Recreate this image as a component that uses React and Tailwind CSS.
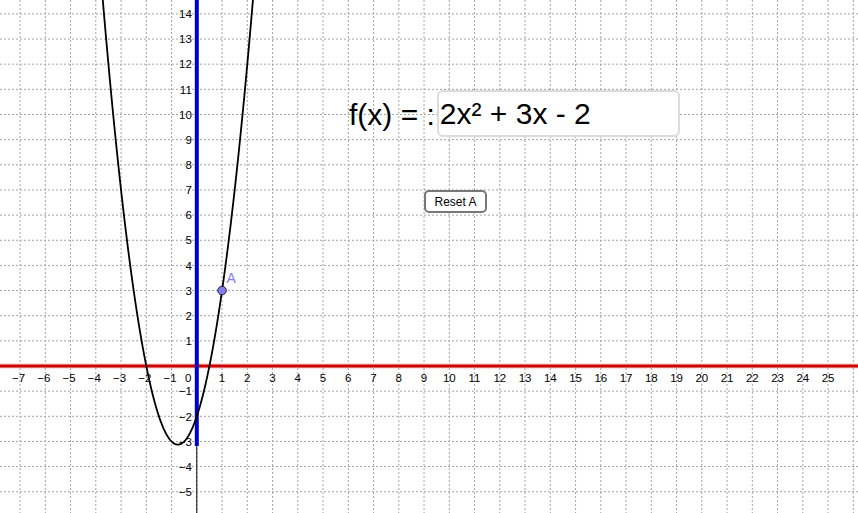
import React from "react";

const OX = 196.8;
const OY = 366;
const UX = 25.25;
const UY = 25.15;
const px = (x) => OX + x * UX;
const py = (y) => OY - y * UY;
const f = (x) => 2 * x * x + 3 * x - 2;

const minus = (n) => (n < 0 ? "\u2212" + Math.abs(n) : String(n));
const FONT = '"Liberation Sans", Arial, sans-serif';

function Graph() {
  const vx = [];
  for (let k = -7; k <= 26; k++) vx.push(k);
  const hy = [];
  for (let k = -5; k <= 14; k++) hy.push(k);

  let d = "";
  for (let i = 0; i <= 400; i++) {
    const x = -4.2 + (i / 400) * 6.9;
    d += (i === 0 ? "M" : "L") + px(x).toFixed(2) + " " + py(f(x)).toFixed(2) + " ";
  }

  return (
    <svg width="858" height="513" className="block" fontFamily={FONT}>
      {vx.map((k) => (
        <line key={"v" + k} x1={px(k)} y1={0} x2={px(k)} y2={513} stroke="#a3a3a3" strokeWidth="1" strokeDasharray="2 2" />
      ))}
      {hy.map((k) => (
        <line key={"h" + k} x1={0} y1={py(k)} x2={858} y2={py(k)} stroke="#a3a3a3" strokeWidth="1" strokeDasharray="2 2" />
      ))}
      <line x1={OX} y1={0} x2={OX} y2={513} stroke="#000" strokeWidth="1" />
      <line x1={0} y1={OY} x2={858} y2={OY} stroke="#000" strokeWidth="1" />

      {vx
        .filter((k) => k !== 0 && k <= 25)
        .map((k) => (
          <text key={"xl" + k} x={px(k) + (k < 0 ? -1.5 : 0)} y={382} fontSize="11.5" textAnchor="middle" fill="#000">
            {minus(k)}
          </text>
        ))}
      <text x={191.5} y={382} fontSize="11.5" textAnchor="end" fill="#000">
        0
      </text>
      {hy
        .filter((k) => k !== 0)
        .map((k) => (
          <text key={"yl" + k} x={191.8} y={py(k) + 4.2} fontSize="11.5" textAnchor="end" fill="#000">
            {minus(k)}
          </text>
        ))}

      <line x1={0} y1={OY} x2={858} y2={OY} stroke="#e98a8a" strokeWidth="4.5" />
      <line x1={0} y1={OY} x2={858} y2={OY} stroke="#cc0000" strokeWidth="2.6" />

      <line x1={OX} y1={0} x2={OX} y2={446} stroke="#0000cc" strokeWidth="4" />

      <path d={d} fill="none" stroke="#000" strokeWidth="1.8" />

      <circle cx={px(1)} cy={py(3)} r="4.3" fill="#7d7df0" stroke="#222" strokeWidth="1" />
      <text x={226.5} y={283} fontSize="14" fill="#7d7df0">
        A
      </text>
    </svg>
  );
}

export default function App() {
  return (
    <div className="relative w-[858px] h-[513px] bg-white overflow-hidden font-['Liberation_Sans',Arial,sans-serif]">
      <Graph />

      {/* controls floating over the graphics view */}
      <div className="absolute left-[349px] top-[90px] flex flex-col items-start">
        <div className="flex items-center h-[47px] text-[30px] leading-none text-black">
          <span className="mr-[2px] pt-[2px]">f(x) = :</span>
          <div className="w-[243px] h-[47px] bg-white border-2 border-[#dcdcdc] rounded-[6px] flex items-center pl-[1px]">
            2x² + 3x - 2
          </div>
        </div>
        <button className="mt-[53px] ml-[75px] w-[63px] h-[23px] bg-white border-2 border-[#777] rounded-[5px] flex items-center justify-center text-[12px] text-black">
          Reset A
        </button>
      </div>
    </div>
  );
}
